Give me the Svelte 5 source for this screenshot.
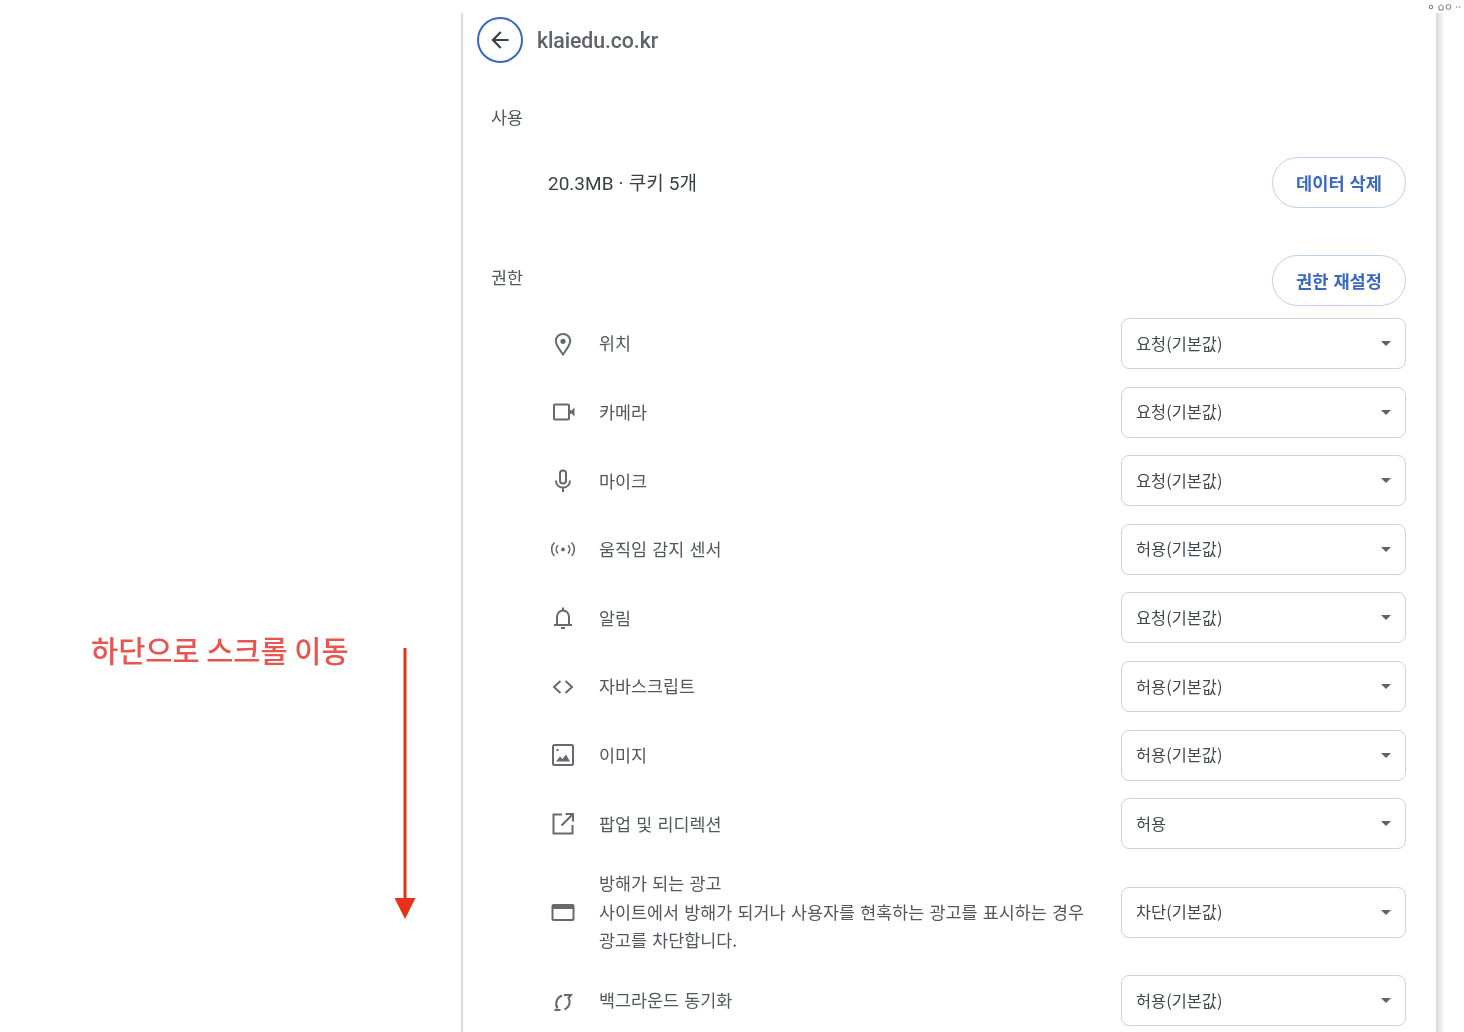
<script>
	const rows = [
		{ icon: 'pin', label: '위치', value: '요청(기본값)' },
		{ icon: 'camera', label: '카메라', value: '요청(기본값)' },
		{ icon: 'mic', label: '마이크', value: '요청(기본값)' },
		{ icon: 'sensor', label: '움직임 감지 센서', value: '허용(기본값)' },
		{ icon: 'bell', label: '알림', value: '요청(기본값)' },
		{ icon: 'code', label: '자바스크립트', value: '허용(기본값)' },
		{ icon: 'image', label: '이미지', value: '허용(기본값)' },
		{ icon: 'popup', label: '팝업 및 리디렉션', value: '허용' },
		{
			icon: 'ads',
			label: '방해가 되는 광고',
			desc: '사이트에서 방해가 되거나 사용자를 현혹하는 광고를 표시하는 경우 광고를 차단합니다.',
			value: '차단(기본값)'
		},
		{ icon: 'sync', label: '백그라운드 동기화', value: '허용(기본값)' }
	];
</script>

<div class="page">
	<div class="topbar">
		<svg width="34" height="8" viewBox="0 0 34 8" fill="none" stroke="#777" stroke-width="1">
			<circle cx="4" cy="4" r="1.8" />
			<path d="M12 7V3.500L14 1.500 16 3.500V7Z" />
			<circle cx="21.500" cy="4" r="2.400" />
			<path d="M29 4h1.500M32 4h1.500" />
		</svg>
	</div>

	<div class="body">
		<aside class="note">
			<div class="note-text">하단으로 스크롤 이동</div>
			<svg class="note-arrow" width="22" height="272" viewBox="0 0 22 272">
				<path d="M11 0V252" stroke="#e8301a" stroke-width="3" />
				<path d="M0.500 250H21.500L11 271Z" fill="#e8301a" />
			</svg>
		</aside>

		<main class="panel">
			<header class="head">
				<button class="back" aria-label="뒤로">
					<svg width="26" height="26" viewBox="0 0 24 24" fill="#3c4043">
						<path d="M20 11H7.830l5.590-5.590L12 4l-8 8 8 8 1.410-1.410L7.830 13H20z" />
					</svg>
				</button>
				<span class="site">klaiedu.co.kr</span>
			</header>

			<h2 class="section usage-title">사용</h2>
			<div class="usage">
				<span class="usage-text">20.3MB · 쿠키 5개</span>
				<button class="pill">데이터 삭제</button>
			</div>

			<div class="perm-head">
				<h2 class="section">권한</h2>
				<button class="pill">권한 재설정</button>
			</div>

			<div class="list">
				{#each rows as row}
					<div class="row" class:tall={row.desc}>
						<span class="icon">
							<svg width="24" height="24" viewBox="0 0 24 24" fill="none" stroke="#666a6e" stroke-width="2">
								{#if row.icon === 'pin'}
									<path d="M12 2C7.800 2 4.800 5.100 4.800 9.100c0 4.100 3.500 8 7.200 13.400 3.700-5.400 7.200-9.300 7.200-13.400C19.200 5.100 16.200 2 12 2Z" />
									<circle cx="12" cy="9.300" r="2.600" fill="#666a6e" stroke="none" />
								{:else if row.icon === 'camera'}
									<rect x="3" y="4.500" width="15" height="15" rx="1" />
									<path d="M19 12 23.500 7.500v9Z" fill="#666a6e" stroke="none" />
									<path d="M17.500 10H20v4h-2.500Z" fill="#666a6e" stroke="none" />
								{:else if row.icon === 'mic'}
									<rect x="9" y="1.500" width="6" height="13" rx="3" />
									<path d="M5 11.500c0 4.300 3 7 7 7s7-2.700 7-7M12 18v5" />
								{:else if row.icon === 'sensor'}
									<g stroke-width="1.600">
										<path d="M3.500 5.500c-3.800 3.700-3.800 9.800 0 13.500M20.500 5.500c3.800 3.700 3.800 9.800 0 13.500" />
										<path d="M7 8.300c-2.300 2.400-2.300 5.800 0 8.200M17 8.300c2.300 2.400 2.300 5.800 0 8.200" />
									</g>
									<circle cx="12" cy="12.400" r="1.900" fill="#666a6e" stroke="none" />
								{:else if row.icon === 'bell'}
									<path d="M6 18.500V11c0-3.700 2.600-6.500 6-6.500s6 2.800 6 6.500v7.500M3 19h18" />
									<path d="M12 1.500v3M10 22h4" />
								{:else if row.icon === 'code'}
									<path d="M9.500 6 3 12l6.500 6M14.500 6 21 12l-6.500 6" />
								{:else if row.icon === 'image'}
									<rect x="2" y="2" width="20" height="20" rx="1.500" />
									<path d="M5 18.500 9 13.500l2.500 2.500 3.500-4.500 4 7Z" fill="#666a6e" stroke="none" />
									<circle cx="6.500" cy="7" r="1.200" fill="#666a6e" stroke="none" />
								{:else if row.icon === 'popup'}
									<path d="M11 2.500H2.500v19h19V13M14.500 2H22v7.500M22 2 10.500 13.500" />
								{:else if row.icon === 'ads'}
									<rect x="1.500" y="5" width="21" height="15" rx="1" />
									<path d="M1.500 7.500h21" stroke-width="3" />
								{:else if row.icon === 'sync'}
									<path d="M11 6.500C6 8.500 3.500 14 6.500 19.500M3.500 21h6M5 16.500l1.500 3" />
									<path d="M13 6h7l-2.500 3c2.500 4 1 9-4 11.500" />
								{/if}
							</svg>
						</span>
						<div class="text">
							<div>{row.label}</div>
							{#if row.desc}<div class="desc">{row.desc}</div>{/if}
						</div>
						<div class="select">
							<span class="value">{row.value}</span>
							<i class="caret"></i>
						</div>
					</div>
				{/each}
			</div>
		</main>

		<div class="gutter"></div>
	</div>
</div>

<style>
	:global(body) {
		background: #fff;
		overflow: hidden;
	}

	.page {
		width: 1464px;
		height: 1032px;
		overflow: hidden;
		font-family: 'Noto Sans CJK KR', 'Liberation Sans', sans-serif;
		color: #54585c;
		filter: blur(0.45px);
	}

	.topbar {
		height: 13px;
		display: flex;
		justify-content: flex-end;
		align-items: center;
		padding-right: 3px;
	}

	.body {
		display: flex;
		height: 1019px;
	}

	.note {
		width: 461px;
		flex: none;
		display: flex;
		align-items: flex-start;
		padding: 616px 0 0 91px;
		box-sizing: border-box;
	}

	.note-text {
		width: 302.5px;
		flex: none;
		font-size: 29.5px;
		line-height: 40px;
		font-weight: 500;
		color: #e8554e;
		white-space: nowrap;
	}

	.note-arrow {
		flex: none;
		margin-top: 19px;
	}

	.panel {
		width: 975px;
		flex: none;
		box-sizing: border-box;
		padding: 0 30px 0 14px;
		border-left: 2px solid #dcdcdc;
	}

	.gutter {
		flex: 1;
		background: linear-gradient(90deg, #d8d8d8, #fff 9px);
	}

	.head {
		display: flex;
		align-items: center;
		gap: 14px;
		height: 54px;
	}

	.back {
		width: 46px;
		height: 46px;
		padding: 0;
		flex: none;
		box-sizing: border-box;
		border: 2.5px solid #3b66c4;
		border-radius: 50%;
		background: #fff;
		display: flex;
		align-items: center;
		justify-content: center;
	}

	.site {
		font-family: Roboto, 'Liberation Sans', sans-serif;
		font-size: 21.3px;
		font-weight: 500;
		letter-spacing: -0.1px;
		color: #5f6368;
	}

	.section {
		margin: 0;
		font-size: 17.4px;
		font-weight: 400;
		line-height: 24px;
		padding-left: 14px;
	}

	.usage-title {
		margin-top: 38px;
	}

	.usage {
		display: flex;
		justify-content: space-between;
		align-items: center;
		margin-top: 28px;
		padding-left: 71px;
		font-family: Roboto, 'Noto Sans CJK KR', sans-serif;
		font-size: 19px;
		line-height: 24px;
		color: #3c4043;
	}

	.usage-text {
		padding-top: 2px;
		word-spacing: 0.4px;
	}

	.pill {
		width: 134px;
		height: 51px;
		padding: 0;
		flex: none;
		background: #fff;
		border: 1.5px solid #bccfee;
		border-radius: 26px;
		font: 700 17.6px 'Noto Sans CJK KR', sans-serif;
		word-spacing: 1px;
		color: #3b68c0;
	}

	.perm-head {
		display: flex;
		justify-content: space-between;
		align-items: center;
		margin-top: 47px;
	}

	.perm-head .section {
		margin-top: -8px;
	}

	.list {
		margin-top: 3.3px;
	}

	.row {
		display: flex;
		align-items: center;
		height: 68.6px;
		padding-left: 74px;
	}

	.row.tall {
		height: 108.4px;
	}

	.icon {
		width: 24px;
		height: 24px;
		flex: none;
		margin-right: 24px;
	}

	.text {
		flex: 1;
		min-width: 0;
		padding-right: 26px;
		font-size: 17.4px;
		line-height: 28.5px;
		word-spacing: 1.4px;
	}

	.select {
		width: 285px;
		height: 51px;
		flex: none;
		box-sizing: border-box;
		display: flex;
		align-items: center;
		justify-content: space-between;
		padding: 0 14px;
		background: #fff;
		border: 1.5px solid #cfd1d5;
		border-radius: 8px;
		font-size: 16.4px;
		color: #44484c;
	}

	.value {
		padding-bottom: 2px;
	}

	.caret {
		width: 0;
		height: 0;
		border: 5px solid transparent;
		border-top-color: #5f6368;
		border-bottom: 0;
	}
</style>
